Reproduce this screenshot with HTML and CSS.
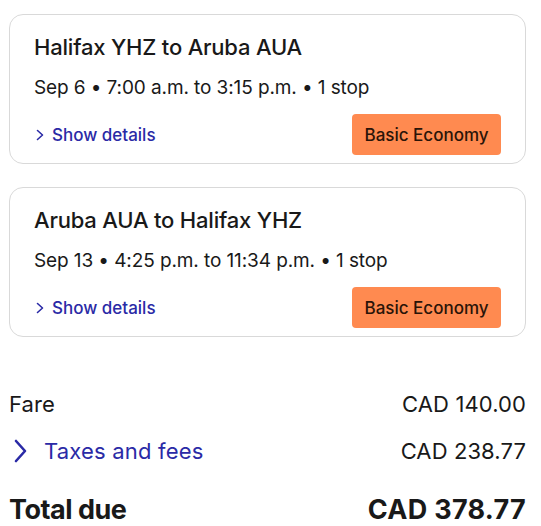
FILE: index.html
```html
<!DOCTYPE html>
<html lang="en">
<head>
<meta charset="utf-8">
<title>Trip summary</title>
<link rel="stylesheet" href="styles.css">
</head>
<body>
<main class="summary">
  <section class="card">
    <h2 class="card-title">Halifax YHZ to Aruba AUA</h2>
    <p class="card-sub">Sep 6 • 7:00 a.m. to 3:15 p.m. • 1 stop</p>
    <div class="card-foot">
      <a class="details" href="#">
        <svg class="chev-sm" viewBox="0 0 10 12" width="10" height="12"><path d="M2.5 1.5 L7.5 6 L2.5 10.5" fill="none" stroke="currentColor" stroke-width="1.6" stroke-linecap="round" stroke-linejoin="round"/></svg>
        Show details
      </a>
      <span class="fare-class">Basic Economy</span>
    </div>
  </section>
  <section class="card">
    <h2 class="card-title">Aruba AUA to Halifax YHZ</h2>
    <p class="card-sub">Sep 13 • 4:25 p.m. to 11:34 p.m. • 1 stop</p>
    <div class="card-foot">
      <a class="details" href="#">
        <svg class="chev-sm" viewBox="0 0 10 12" width="10" height="12"><path d="M2.5 1.5 L7.5 6 L2.5 10.5" fill="none" stroke="currentColor" stroke-width="1.6" stroke-linecap="round" stroke-linejoin="round"/></svg>
        Show details
      </a>
      <span class="fare-class">Basic Economy</span>
    </div>
  </section>

  <div class="totals">
    <div class="row">
      <span>Fare</span>
      <span>CAD 140.00</span>
    </div>
    <div class="row">
      <a class="taxes" href="#">
        <svg class="chev-lg" viewBox="0 0 16 24" width="16" height="24"><path d="M4 2 L13 12 L4 22" fill="none" stroke="currentColor" stroke-width="2.6" stroke-linecap="round" stroke-linejoin="round"/></svg>
        Taxes and fees
      </a>
      <span>CAD 238.77</span>
    </div>
    <div class="row total">
      <span class="total-label">Total due</span>
      <span class="total-amount">CAD 378.77</span>
    </div>
  </div>
</main>
</body>
</html>
```

FILE: styles.css
```css
* { box-sizing: border-box; }

body {
  margin: 0;
  background: #ffffff;
  color: #191919;
  font-family: Inter, "Noto Sans", sans-serif;
}

.summary {
  width: 517px;
  margin-left: 9px;
  padding-top: 14px;
  display: flex;
  flex-direction: column;
}

.card {
  border: 1px solid #d9d9d9;
  border-radius: 14px;
  padding: 18px 24px 8px 24px;
  height: 150px;
  margin-bottom: 23px;
  display: flex;
  flex-direction: column;
}

.card-title {
  margin: 0;
  font-size: 22px;
  line-height: 28px;
  font-weight: 500;
  letter-spacing: -0.2px;
}

.card-sub {
  margin: 15px 0 0 0;
  font-size: 19px;
  line-height: 24px;
  font-weight: 400;
  letter-spacing: -0.1px;
}

.card-foot {
  margin-top: auto;
  display: flex;
  align-items: center;
  justify-content: space-between;
}

.details {
  display: flex;
  align-items: center;
  gap: 7px;
  color: #2a2aa6;
  text-decoration: none;
  font-size: 17px;
  font-weight: 500;
  letter-spacing: 0;
  margin-left: 1px;
}

.chev-sm { display: block; }

.fare-class {
  background: #ff8a50;
  color: #2a1408;
  border-radius: 4px;
  height: 41px;
  width: 149px;
  display: flex;
  align-items: center;
  justify-content: center;
  font-size: 17px;
  font-weight: 500;
  letter-spacing: 0;
}

.totals {
  display: flex;
  flex-direction: column;
  margin-top: 30px;
}

.row {
  display: flex;
  justify-content: space-between;
  align-items: center;
  font-size: 22px;
  line-height: 28px;
  letter-spacing: 0.1px;
  height: 28px;
  margin-bottom: 19px;
}

.taxes {
  display: flex;
  align-items: center;
  gap: 16px;
  color: #2a2aa6;
  text-decoration: none;
  margin-left: 3px;
  letter-spacing: 0.2px;
}

.chev-lg { display: block; }

.row.total {
  margin-top: 10px;
  font-size: 27px;
  font-weight: 700;
  height: 32px;
  line-height: 32px;
}

.total-label { letter-spacing: -0.5px; }

.total-amount { letter-spacing: 0.3px; }
```
